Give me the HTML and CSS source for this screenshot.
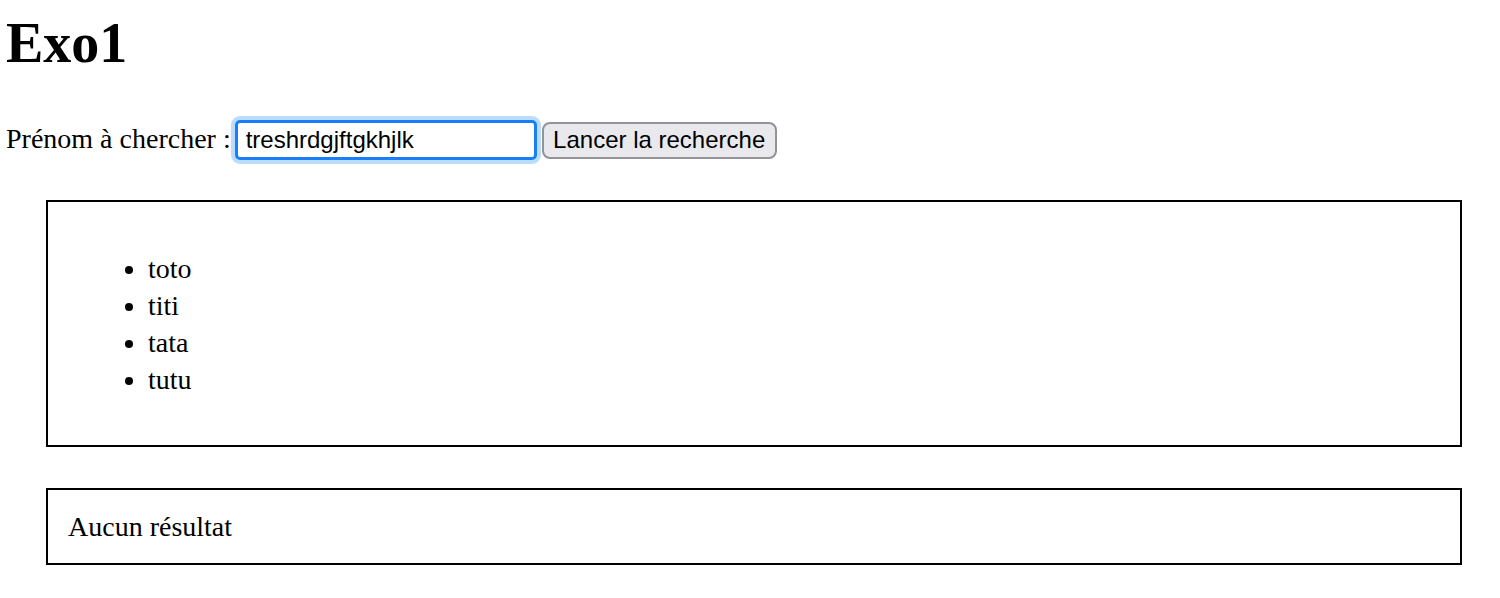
FILE: index.html
```html
<!DOCTYPE html>
<html lang="fr">
<head>
<meta charset="utf-8">
<title>Exo1</title>
<link rel="stylesheet" href="styles.css">
</head>
<body>
<h1 class="title">Exo1</h1>
<form class="search">
  <label class="search-label" for="prenom">Prénom à chercher :</label>
  <input class="search-input" id="prenom" type="text" value="treshrdgjftgkhjlk">
  <button class="search-button" type="button">Lancer la recherche</button>
</form>
<div class="box box-list">
  <ul class="names">
    <li>toto</li>
    <li>titi</li>
    <li>tata</li>
    <li>tutu</li>
  </ul>
</div>
<div class="box box-result">Aucun résultat</div>
</body>
</html>
```

FILE: styles.css
```css
html, body {
  margin: 0;
  padding: 0;
  background: #ffffff;
}

body {
  padding-left: 6px;
  font-family: "Liberation Serif", "Times New Roman", serif;
  font-size: 28px;
  line-height: 37px;
  color: #000000;
}

.title {
  margin: 11px 0 0 0;
  font-size: 56px;
  line-height: 64px;
  font-weight: bold;
}

.search {
  display: flex;
  align-items: center;
  margin-top: 45px;
  height: 40px;
}

.search-label {
  margin-right: 4px;
  padding-bottom: 4px;
}

.search-input {
  box-sizing: border-box;
  width: 302px;
  height: 40px;
  margin: 0;
  padding: 0 0 0 8px;
  border: 3px solid #1a7ff6;
  border-radius: 5px;
  box-shadow: 0 0 0 4px #bcdcfd;
  outline: none;
  font-family: "Liberation Sans", Arial, sans-serif;
  font-size: 24px;
  color: #000000;
  background: #ffffff;
}

.search-button {
  box-sizing: border-box;
  height: 37px;
  width: 235px;
  margin: 0 0 0 5px;
  padding: 0;
  border: 2px solid #929297;
  border-radius: 8px;
  background: #e9e9ed;
  font-family: "Liberation Sans", Arial, sans-serif;
  font-size: 24px;
  color: #000000;
}

.box {
  border: 2px solid #000000;
  margin: 0 38px 0 40px;
  padding: 18px 20px;
}

.box-list {
  margin-top: 40px;
  padding-top: 20px;
  padding-bottom: 19px;
}

.names {
  margin: 28px 0;
  padding-left: 80px;
}

.box-result {
  margin-top: 41px;
}
```
